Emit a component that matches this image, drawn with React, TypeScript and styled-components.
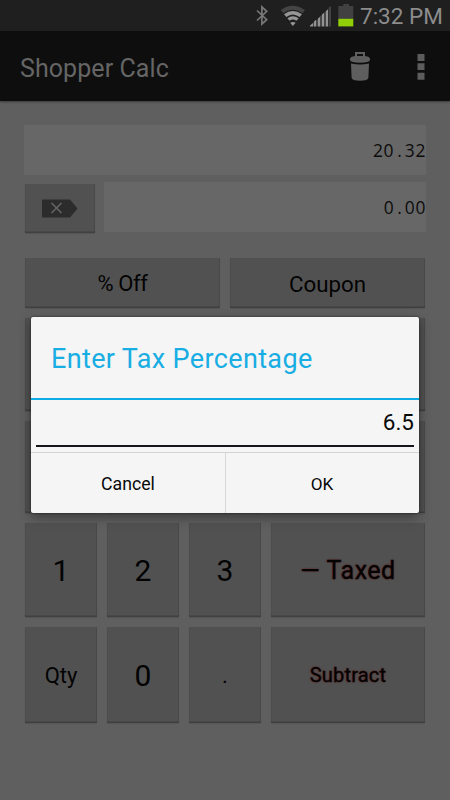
import React from 'react';
import styled, { createGlobalStyle } from 'styled-components';

const GlobalStyle = createGlobalStyle`
  * { box-sizing: border-box; }
  body { margin: 0; background: #5f5f5f; overflow: hidden; font-family: Roboto, sans-serif; }
  button { font-family: inherit; border: 0; margin: 0; padding: 0; }
`;

const Screen = styled.div`
  position: relative;
  width: 450px;
  height: 800px;
  overflow: hidden;
  background: #5f5f5f;
`;

const StatusBar = styled.header`
  display: flex;
  justify-content: flex-end;
  height: 31px;
  background: #1f1f1f;
`;

const StatusIcons = styled.svg`
  width: 106px;
  height: 31px;
`;

const Clock = styled.div`
  width: 94px;
  padding-left: 4px;
  color: #8c8c8c;
  font-size: 22.5px;
  line-height: 32px;
  white-space: nowrap;
`;

const ActionBar = styled.div`
  display: flex;
  align-items: center;
  justify-content: space-between;
  height: 70px;
  padding-left: 20px;
  background: #0e0e0e;
  box-shadow: 0 1px 2px #3a3a3a;
`;

const AppTitle = styled.h1`
  margin: 0;
  padding-top: 4px;
  color: #656565;
  font-size: 25px;
  font-weight: 400;
  letter-spacing: 0.08px;
`;

const ActionIcons = styled.svg`
  width: 110px;
  height: 70px;
`;

const Content = styled.main`
  padding: 24px 24px 0;
`;

const Field = styled.div`
  flex: 1;
  height: 50px;
  background: #676767;
  color: #0c0c0c;
  font: 17.4px/51px 'Open Sans', 'Noto Sans', sans-serif;
  letter-spacing: 0.65px;
  text-align: right;
`;

const DecimalPoint = styled.span`
  display: inline-block;
  width: 10.6px;
  letter-spacing: 0;
  text-align: center;
`;

const EntryRow = styled.div`
  display: flex;
  align-items: flex-start;
  gap: 9px;
  padding-top: 7px;
`;

const Key = styled.button<{ $size?: number; $spacing?: number; $glow?: boolean; $drop?: number }>`
  display: flex;
  align-items: center;
  justify-content: center;
  height: 100%;
  padding-top: ${p => p.$drop ?? 0}px;
  border-radius: 1px;
  background: #515151;
  box-shadow: inset 0 -1.5px #404040, inset -1px 0 #494949, inset 1px 0 #4d4d4d, 0 1px 1px #565656;
  color: #030303;
  font-size: ${p => p.$size ?? 22}px;
  font-weight: 400;
  letter-spacing: ${p => p.$spacing ?? 0}px;
  white-space: pre;
  -webkit-text-stroke: ${p => (p.$glow ? '0.3px #030303' : '0')};
  text-shadow: ${p => (p.$glow ? '0 0 2px #6b1212' : 'none')};
`;

const EraseKey = styled(Key)`
  width: 70px;
  height: 49px;
  margin: 2px 0 0 1px;
`;

const DiscountRow = styled.div`
  display: grid;
  grid-template-columns: 195px 195px;
  gap: 10px;
  height: 50px;
  margin: 25px 0 0 1px;
`;

const Keypad = styled.div`
  display: grid;
  grid-template-columns: 72px 72px 72px 154px;
  grid-template-rows: 93px 92px 94px 96px;
  gap: 10px;
  margin: 10px 0 0 1px;
`;

const Dialog = styled.section`
  position: absolute;
  left: 31px;
  top: 317px;
  width: 388px;
  height: 196px;
  display: flex;
  flex-direction: column;
  border-radius: 2px;
  background: #f5f5f5;
  box-shadow: 0 0 2px #222, 0 4px 12px rgba(0, 0, 0, 0.4);
`;

const DialogTitle = styled.h2`
  height: 83px;
  margin: 0;
  padding-left: 20px;
  border-bottom: 2px solid #0bade4;
  color: #18ade3;
  font-size: 27px;
  font-weight: 400;
  line-height: 85px;
  letter-spacing: 0.35px;
  white-space: nowrap;
`;

const TaxInput = styled.div`
  height: 47px;
  margin: 0 5px 5px;
  border-bottom: 2px solid #171519;
  color: #080808;
  font-size: 22.5px;
  line-height: 45px;
  text-align: right;
`;

const DialogActions = styled.div`
  flex: 1;
  display: grid;
  grid-template-columns: 1fr 1fr;
  border-top: 1px solid #d4d4d4;
`;

const DialogButton = styled.button<{ $divided?: boolean }>`
  border-left: ${p => (p.$divided ? '1px solid #d7d7d7' : '0')};
  background: transparent;
  color: #080808;
  font-size: ${p => (p.$divided ? 17.2 : 17.7)}px;
  padding: 1px ${p => (p.$divided ? 1 : 0)}px 0 0;
`;

const Amount = ({ whole, cents }: { whole: string; cents: string }) => (
  <Field>{whole}<DecimalPoint>.</DecimalPoint>{cents}</Field>
);

const hiddenKeys = Array.from({ length: 8 }, (_, i) => i);

export default function App() {
  return (
    <Screen>
      <GlobalStyle />
      <StatusBar>
        <StatusIcons viewBox="250 0 106 31">
          <path d="M257 10.5l9.7 9.2-4.8 4.3V7l4.8 4.3-9.7 9.2" fill="none" stroke="#777" strokeWidth="1.7" />
          <path d="M280.7 10Q292.5 1.5 305 10L302.5 13.2Q292.5 6.5 283.3 13.2Z" fill="#444" />
          <path d="M284 14.3Q292.5 7.7 302 14.3L299.6 17Q292.5 12 286.4 17ZM287.4 18.3Q292.6 14.2 298.7 18.3L296.4 20.8Q292.6 18.3 289.6 20.8ZM290.2 22.8Q292.6 21 295.7 22.8L292.8 26Z" fill="#969696" />
          <path d="M310 26.5v-1l3-2.5v3.5M314 26.5v-5l2-1.7v6.7M318 26.5v-8l2-1.7v9.7M322 26.5v-12l2-1.8v13.8M326 26.5V11l2-1.8v17.3" fill="#929292" />
          <path d="M313 26.5V23l1-1v4.5M316 26.5v-6l2-1.7v7.7M320 26.5v-10l2-1.8v11.8M324 26.5V12.7l2-1.7v15.5" fill="#484848" />
          <path d="M328.5 26.5V7.7l2.5-2v20.8" fill="#414141" />
          <path d="M338.3 19V6h5V4h5.7v2h4.3v13" fill="#414141" />
          <path d="M338.3 18.8h15v7.6h-15z" fill="#91cf08" />
        </StatusIcons>
        <Clock>7:32 PM</Clock>
      </StatusBar>
      <ActionBar>
        <AppTitle>Shopper Calc</AppTitle>
        <ActionIcons viewBox="340 31 110 70">
          <path fillRule="evenodd" d="M355 56v-4h10v4q5 .5 5 3v1q-.5 2.8-10 2.8T350 60v-1q0-2.5 5-3Zm2 0h6v-2h-6zM351 63.5q9 2.2 18 0l-.6 14q-.3 3.2-8.4 3.2t-8.4-3.2z" fill="#5e5e5e" />
          <path d="M417.5 54h7v7h-7zm0 9.3h7v6.8h-7zm0 9.5h7v7h-7z" fill="#5c5c5c" />
        </ActionIcons>
      </ActionBar>
      <Content>
        <Amount whole="20" cents="32" />
        <EntryRow>
          <EraseKey aria-label="Erase">
            <svg width="36" height="19" viewBox="0 0 36 19">
              <path d="M1 .5h27l7.5 9L28 18.5H1q-1 0-1-1V1.5Q0 .5 1 .5z" fill="#2c2c2c" />
              <path d="M9.5 4l10 10m0-10l-10 10" stroke="#626262" strokeWidth="1.7" />
            </svg>
          </EraseKey>
          <Amount whole="0" cents="00" />
        </EntryRow>
        <DiscountRow>
          <Key $size={22} $spacing={-0.4} $drop={1}>% Off</Key>
          <Key $size={22.3} $drop={1}>Coupon</Key>
        </DiscountRow>
        <Keypad>
          {hiddenKeys.map(key => <Key key={key} aria-hidden="true" />)}
          <Key $size={30}>1</Key>
          <Key $size={30}>2</Key>
          <Key $size={30}>3</Key>
          <Key $size={25} $spacing={0.5} $glow $drop={1}>— Taxed</Key>
          <Key $size={22} $drop={1}>Qty</Key>
          <Key $size={30}>0</Key>
          <Key $size={22}>.</Key>
          <Key $size={20} $spacing={0.2} $glow>Subtract</Key>
        </Keypad>
      </Content>
      <Dialog role="dialog">
        <DialogTitle>Enter Tax Percentage</DialogTitle>
        <TaxInput>6.5</TaxInput>
        <DialogActions>
          <DialogButton>Cancel</DialogButton>
          <DialogButton $divided>OK</DialogButton>
        </DialogActions>
      </Dialog>
    </Screen>
  );
}
